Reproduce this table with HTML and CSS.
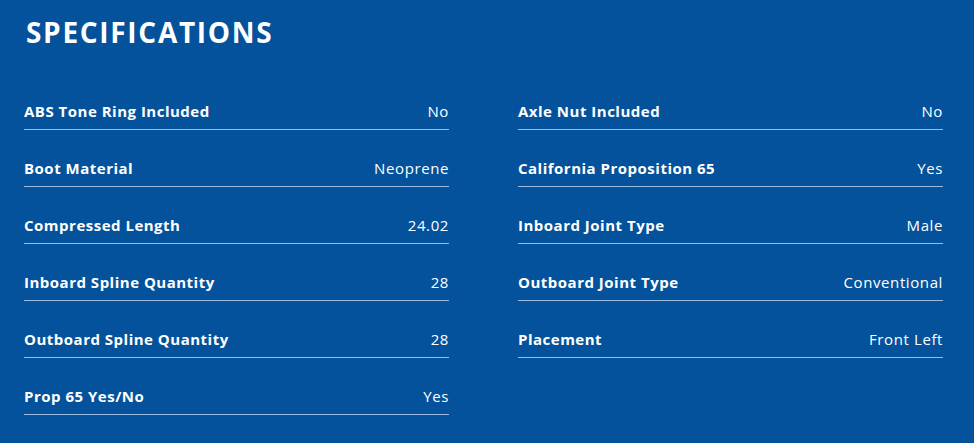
FILE: index.html
```html
<!DOCTYPE html>
<html lang="en">
<head>
<meta charset="utf-8">
<title>Specifications</title>
<link rel="stylesheet" href="styles.css">
</head>
<body>
<section class="specs">
  <h2 class="specs-title">SPECIFICATIONS</h2>
  <div class="specs-grid">
    <div class="specs-col">
      <div class="spec-row"><span class="spec-label">ABS Tone Ring Included</span><span class="spec-value">No</span></div>
      <div class="spec-row"><span class="spec-label">Boot Material</span><span class="spec-value">Neoprene</span></div>
      <div class="spec-row"><span class="spec-label">Compressed Length</span><span class="spec-value">24.02</span></div>
      <div class="spec-row"><span class="spec-label">Inboard Spline Quantity</span><span class="spec-value">28</span></div>
      <div class="spec-row"><span class="spec-label">Outboard Spline Quantity</span><span class="spec-value">28</span></div>
      <div class="spec-row"><span class="spec-label">Prop 65 Yes/No</span><span class="spec-value">Yes</span></div>
    </div>
    <div class="specs-col">
      <div class="spec-row"><span class="spec-label">Axle Nut Included</span><span class="spec-value">No</span></div>
      <div class="spec-row"><span class="spec-label">California Proposition 65</span><span class="spec-value">Yes</span></div>
      <div class="spec-row"><span class="spec-label">Inboard Joint Type</span><span class="spec-value">Male</span></div>
      <div class="spec-row"><span class="spec-label">Outboard Joint Type</span><span class="spec-value">Conventional</span></div>
      <div class="spec-row"><span class="spec-label">Placement</span><span class="spec-value">Front Left</span></div>
    </div>
  </div>
</section>
</body>
</html>
```
FILE: styles.css
```css
html, body {
  margin: 0;
  padding: 0;
  background: #03529b;
}
body {
  font-family: "Open Sans", "DejaVu Sans", sans-serif;
  color: #ffffff;
  width: 974px;
  height: 443px;
  overflow: hidden;
}
.specs {
  padding: 14px 31px 0 24px;
}
.specs-title {
  margin: 0 0 0 2px;
  font-size: 28px;
  font-weight: 700;
  line-height: 36px;
  letter-spacing: 1.7px;
}
.specs-grid {
  display: grid;
  grid-template-columns: 425px 425px;
  column-gap: 69px;
  margin-top: 23px;
}
.specs-col {
  display: flex;
  flex-direction: column;
}
.spec-row {
  display: flex;
  justify-content: space-between;
  align-items: center;
  height: 56px;
  box-sizing: content-box;
  border-bottom: 1px solid #9dbbe0;
}
.spec-row span {
  font-size: 15px;
  line-height: 20px;
  margin-top: 20px;
}
.spec-label {
  font-weight: 700;
  letter-spacing: 0.5px;
}
.spec-value {
  font-weight: 400;
  letter-spacing: 0.6px;
}
```
